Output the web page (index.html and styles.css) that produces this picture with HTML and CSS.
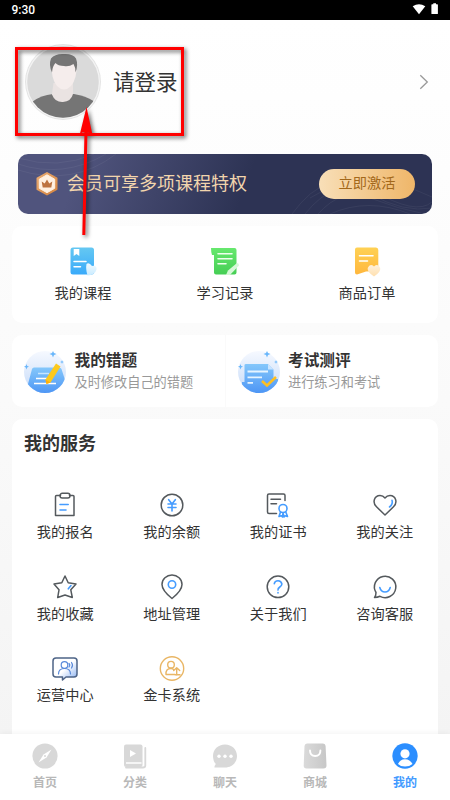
FILE: index.html
```html
<!DOCTYPE html>
<html lang="zh-CN">
<head>
<meta charset="utf-8">
<meta name="viewport" content="width=device-width">
<title>我的</title>
<link rel="stylesheet" href="styles.css">
</head>
<body>
<div class="screen">
  <header class="status">
    <span class="time">9:30</span>
    <svg class="status-icons" width="28" height="14" viewBox="0 0 28 14"><path d="M1.700 4.200Q8 .2 14.300 4.200L8 12.200Z" fill="#fff"/><path d="M21 2.300h1.300V1.300h2.700v1H26.300q.6 0 .6.600v8.600q0 .6-.6.600h-5.300q-.6 0-.6-.6v-8.600q0-.6.600-.6" fill="#fff"/></svg>
  </header>

  <main class="content">
    <section class="profile">
      <svg class="avatar" width="78" height="78" viewBox="0 0 78 78">
        <defs><clipPath id="face"><circle cx="39" cy="39" r="35.800"/></clipPath></defs>
        <circle cx="39" cy="39" r="38" fill="#e4e4e4"/><circle cx="39" cy="39" r="37" fill="#f4f4f4"/>
        <g clip-path="url(#face)">
          <rect width="78" height="78" fill="#dadada"/>
          <path d="M0 78L8 59Q17 52 29 51H50Q62 53 69.500 58L78 78Z" fill="#757575"/>
          <path d="M29.500 40H49V51Q47 58.500 39 59T28 51.500Z" fill="#eae3e2"/>
          <path d="M27.500 20Q28 14 40 14T52.500 22Q53 36 47 43Q40 50 33 43Q27 36 27.500 20" fill="#f5edec"/>
          <path d="M28 29.500Q24.500 22 27 15.500Q31 10.500 40 11Q49 10.500 52 15.500Q54.500 22 51.500 29.500Q51.500 24 49.500 21Q45 24 40 23Q34 23 31.500 20Q28.500 23 28 29.500" fill="#757575"/>
        </g>
      </svg>
      <span class="login">请登录</span>
      <svg class="chevron" width="10" height="16" viewBox="0 0 10 16"><path d="M1.300 1.200L8.300 8 1.300 14.800" fill="none" stroke="#999" stroke-width="1.300"/></svg>
    </section>

    <section class="vip">
      <svg class="waves" width="414" height="60" viewBox="0 0 414 60" fill="none" stroke="#fff" stroke-opacity=".055">
        <path d="M0 10Q45 25 88 0M0 16Q55 33 98 0M0 4Q40 16 76 0M274 60Q310 10 354 36T414 48M287 60Q318 21 352 40T414 54M300 60Q324 33 352 44T407 60M312 60Q350 43 392 60M292 44Q345 10 414 43"/>
      </svg>
      <svg class="badge" width="24" height="28" viewBox="0 0 24 28">
        <defs><linearGradient id="rim" x2="1" y2="1"><stop stop-color="#e9ab72"/><stop offset="1" stop-color="#d4843f"/></linearGradient></defs>
        <path d="M12 3L21.500 8.300V19.200L12 24.500 2.500 19.200V8.300Z" fill="url(#rim)" stroke="url(#rim)" stroke-width="2" stroke-linejoin="round"/>
        <path d="M12 4.800L19.700 9.200V18.300L12 22.700 4.300 18.300V9.200Z" fill="#fff0e1" stroke="#fff0e1" stroke-linejoin="round"/>
        <path d="M6.700 11.500L9.700 13.500 12 9.600 14.300 13.500 17.300 11.500 16.300 17.500H7.700Z" fill="#bd7340"/>
      </svg>
      <span class="vip-text">会员可享多项课程特权</span>
      <span class="activate">立即激活</span>
    </section>

    <section class="card shortcuts">
      <div class="shortcut">
        <svg width="32" height="32" viewBox="0 0 32 32"><defs><linearGradient id="blue" x2="0" y2="1"><stop stop-color="#65c8f2"/><stop offset="1" stop-color="#39aafa"/></linearGradient><linearGradient id="pale" x2="0" y2="1"><stop stop-color="#f0faff"/><stop offset="1" stop-color="#c9ebff"/></linearGradient></defs>
          <rect x="3.500" y="2.500" width="23.500" height="27" rx="2.500" fill="url(#blue)"/><path d="M6.700 4H12.300V11L9.500 9 6.700 11Z" fill="#fff"/><path d="M7 16.500H19M7 21.700H13.500" stroke="#fff" stroke-width="1.500" stroke-linecap="round"/><path d="M19.500 19Q22 17 25 21Q30 20 29.500 24.500Q28 30 20.500 30.500Q18.500 24 19.500 19" fill="url(#pale)"/></svg>
        <span class="label">我的课程</span>
      </div>
      <div class="shortcut">
        <svg width="32" height="32" viewBox="0 0 32 32"><defs><linearGradient id="green" x2="0" y2="1"><stop stop-color="#67e86e"/><stop offset="1" stop-color="#45ce54"/></linearGradient></defs>
          <path d="M2 3H25.500Q27.500 3 27.500 5V27.500Q27.500 29.500 25.500 29.500H7Q5 29.500 5 27.500V10H3Q2 7 2 3" fill="url(#green)"/><path d="M9 8.700H23M9 13.700H23M9 18.700H17" stroke="#efffed" stroke-width="1.600" stroke-linecap="round"/><path d="M17 30L19 25.500 28 18Q30 18 30 20.500L21 30Z" fill="#d6f8d7"/></svg>
        <span class="label">学习记录</span>
      </div>
      <div class="shortcut">
        <svg width="32" height="32" viewBox="0 0 32 32"><defs><linearGradient id="yellow" x2="0" y2="1"><stop stop-color="#ffd154"/><stop offset="1" stop-color="#ffb73d"/></linearGradient><linearGradient id="cream" x2="0" y2="1"><stop stop-color="#fff1db"/><stop offset="1" stop-color="#ffdfae"/></linearGradient></defs>
          <path d="M6 2.500H25Q27.300 2.500 27.300 5V26L15 26.500 6 29.500Q4 29.500 4 27.500V4.500Q4 2.500 6 2.500" fill="url(#yellow)"/><path d="M8.500 10.700H22M8.500 16H16.500" stroke="#fff" stroke-width="1.600" stroke-linecap="round"/><path d="M23 31.500Q16 27 16.700 23Q19 18 23 21.500Q27 18 29.200 23Q30 27 23 31.500" fill="url(#cream)"/></svg>
        <span class="label">商品订单</span>
      </div>
    </section>

    <section class="card practice">
      <div class="practice-item">
        <svg width="46" height="50" viewBox="0 0 46 50"><defs><linearGradient id="disc" x2="0" y2="1"><stop stop-color="#f6f9ff"/><stop offset="1" stop-color="#c5daf8"/></linearGradient><linearGradient id="sheet" x2="0" y2="1"><stop stop-color="#84c7fb"/><stop offset="1" stop-color="#468ff4"/></linearGradient><clipPath id="round"><circle cx="23" cy="25" r="21"/></clipPath></defs>
          <circle cx="23" cy="25" r="21" fill="url(#disc)"/><path clip-path="url(#round)" d="M10 22Q10.500 20.500 12 20.500H37Q39 20.500 39.500 22L44 36V50H2V37H6Z" fill="url(#sheet)"/>
          <path d="M16 26.500H27" stroke="#c6e5ff" stroke-width="1.500"/><path d="M14 31.500H25M12 36.500H34" stroke="#fff" stroke-width="1.500"/><path d="M34 16.500L38.500 19.500 28.500 35.500 24.500 37 23.500 32.500Z" fill="#fdc91d"/><path d="M23.500 32.500L28.500 35.500 24.500 37Z" fill="#ffad0d"/>
          <path d="M31 4L32 6 34.500 7 32 8 31 10.500 30 8 27.500 7 30 6ZM4.500 17L5.200 19 7 19.500 5.200 20.500 4.500 22.500 3.800 20.500 2 19.500 3.800 19ZM40 13L40.500 14.500 42 15 40.500 15.500 40 17 39.500 15.500 38 15 39.500 14.500Z" fill="#68b6fb"/></svg>
        <div class="practice-copy"><strong>我的错题</strong><span>及时修改自己的错题</span></div>
      </div>
      <div class="practice-item second">
        <svg width="46" height="50" viewBox="0 0 46 50"><circle cx="23" cy="25" r="21" fill="url(#disc)"/><path clip-path="url(#round)" d="M8.500 18Q8.500 17 10 17H32L37.500 22.500V32H42V50H6V35H8.500Z" fill="url(#sheet)"/><path d="M32 17L37.500 22.500H32Z" fill="#c9e4ff"/>
          <path d="M11.500 24.500H32M11.500 30.300H26M11.500 35.800H17" stroke="#e6f4ff" stroke-width="1.800"/><path d="M26 34L31 38.500 40 30" fill="none" stroke="#fdbf20" stroke-width="2.600"/>
          <path d="M31 4L32 6 34.500 7 32 8 31 10.500 30 8 27.500 7 30 6ZM4.500 17L5.200 19 7 19.500 5.200 20.500 4.500 22.500 3.800 20.500 2 19.500 3.800 19ZM40 13L40.500 14.500 42 15 40.500 15.500 40 17 39.500 15.500 38 15 39.500 14.500Z" fill="#68b6fb"/></svg>
        <div class="practice-copy"><strong>考试测评</strong><span>进行练习和考试</span></div>
      </div>
    </section>

    <section class="card services">
      <h2>我的服务</h2>
      <div class="service-grid">
        <div class="service"><svg viewBox="0 0 28 28"><path d="M9.500 4.500H5.500Q4.500 4.500 4.500 5.500V24.500H23V5.500Q23 4.500 22 4.500H18.500"/><rect x="9" y="2.300" width="10" height="4.700" rx="2.300"/><path class="accent" d="M9 13.500H17.200M9 19H15"/></svg><span class="label">我的报名</span></div>
        <div class="service"><svg viewBox="0 0 28 28"><circle cx="14" cy="14" r="10.800"/><path class="accent" d="M10.700 8.700L14 13 17.300 8.700M10 13H18M10 16.500H18M14 13V20"/></svg><span class="label">我的余额</span></div>
        <div class="service"><svg viewBox="0 0 28 28"><path d="M12.500 22.500H5Q3.500 22.500 3.500 21V4.500Q3.500 3 5 3H19.500Q21 3 21 4.500V9.500M7 8.200H16.500M7 12.800H12.500"/><g class="accent"><circle cx="19" cy="17.500" r="4"/><path d="M16.500 21L15 25.500 17.500 24.700 18.500 26 19 22 20 26 21 24.700 23.500 25.500 21.800 21"/></g></svg><span class="label">我的证书</span></div>
        <div class="service"><svg viewBox="0 0 28 28"><path d="M14 24L5.500 15.800C1 11.500 3.300 4.500 9 4.500Q12 4.500 14 7Q16 4.500 19 4.500C24.700 4.500 27 11.500 22.500 15.800Z"/><path class="accent" d="M21 9.200Q22.300 13 18.500 16"/></svg><span class="label">我的关注</span></div>
        <div class="service"><svg viewBox="0 0 28 28"><path d="M14 3L17.200 9.700 25 11 19.800 16.800 21.300 24.500 14 22 6.700 24.500 8 16.800 3 11 10.800 9.700Z"/><path class="accent" d="M20 12.500L17.300 15.800"/></svg><span class="label">我的收藏</span></div>
        <div class="service"><svg viewBox="0 0 28 28"><path d="M14 25.500Q4 17.500 4 11.500A10 9.500 0 0 1 24 11.500Q24 17.500 14 25.500Z"/><circle class="accent" cx="14" cy="11.500" r="3.700"/></svg><span class="label">地址管理</span></div>
        <div class="service"><svg viewBox="0 0 28 28"><circle cx="14" cy="13.800" r="10.800"/><path class="accent" d="M10.300 10.700Q10.800 7.700 14 7.700T17.900 11Q17.900 12.500 15.800 14T14 17M14 19.500V20"/></svg><span class="label">关于我们</span></div>
        <div class="service"><svg viewBox="0 0 28 28"><path d="M5 19.500A10.700 10.700 0 1 1 9 23.300Q6.500 24.500 3.500 24.500Q5 23 5 19.500Z"/><path class="accent" d="M8.800 14.500Q10 19 14 19T19.200 14.500"/></svg><span class="label">咨询客服</span></div>
        <div class="service"><svg viewBox="0 0 28 28"><defs><linearGradient id="bubble" x2="1" y2="1"><stop offset=".5" stop-color="#fff"/><stop offset="1" stop-color="#86aef0"/></linearGradient></defs><path class="bubble" d="M5 4H23Q26 4 26 7V20Q26 23 23 23H15L11.500 26V23H5Q2 23 2 20V7Q2 4 5 4Z"/><g class="community"><circle cx="13.500" cy="11" r="3.300"/><path d="M7.500 20Q7.500 14.500 13.500 14.500T19.500 20M18 9.500Q19.500 11 18 13M20.500 8.500Q22.500 11 20.500 14"/></g></svg><span class="label">运营中心</span></div>
        <div class="service"><svg viewBox="0 0 28 28" class="gold"><circle cx="14" cy="14.500" r="11.700"/><circle cx="13" cy="10.700" r="3.300"/><path d="M17 20.500H8Q7.500 14.500 13 14.500Q15 14.500 16 16M18.700 21V14M15.700 16.500L18.700 13.700 21.700 16.500M17 20.700H22"/></svg><span class="label">金卡系统</span></div>
      </div>
    </section>
  </main>

  <nav class="tabs">
    <div class="tab"><svg viewBox="0 0 28 28"><circle cx="14" cy="14" r="12.600" fill="#d8d8d8"/><path d="M20.500 7.500L15.500 15.500 7.500 20.500 12.500 12.500Z" fill="#fff"/><circle cx="14" cy="14" r="1" fill="#d8d8d8"/></svg><span>首页</span></div>
    <div class="tab"><svg viewBox="0 0 28 28"><rect x="3" y="2.500" width="18.500" height="22.500" rx="2" fill="#d8d8d8"/><path d="M24.300 6V23.500Q24.300 25.500 22 25.500H5" fill="none" stroke="#d8d8d8" stroke-width="1.800" stroke-linecap="round"/><path d="M5 21H20.500" stroke="#fff" stroke-width="1.500"/><path d="M9 8L15 11.500 9 15Z" fill="#fff"/></svg><span>分类</span></div>
    <div class="tab"><svg viewBox="0 0 28 28"><path d="M14 2.500C21 2.500 26 7.500 26 14S21 25.500 14 25.500H3.500Q3 24.500 4.800 22Q2 19 2 14C2 7.500 7 2.500 14 2.500" fill="#d8d8d8"/><circle cx="8" cy="14.300" r="1.700" fill="#fff"/><circle cx="14" cy="14.300" r="1.700" fill="#fff"/><circle cx="20" cy="14.300" r="1.700" fill="#fff"/></svg><span>聊天</span></div>
    <div class="tab"><svg viewBox="0 0 28 28"><defs><linearGradient id="bag"><stop stop-color="#dadada"/><stop offset="1" stop-color="#c7c7c7"/></linearGradient></defs><path d="M6 1.500H22Q24.500 1.500 24.600 4L25.500 23.500Q25.500 26.500 22.500 26.500H5.500Q2.500 26.500 2.700 23.500L3.500 4Q3.700 1.500 6 1.500" fill="url(#bag)"/><path d="M9 8.500Q9 14 14.200 14T19.400 8.500" fill="none" stroke="#fff" stroke-width="1.900" stroke-linecap="round"/></svg><span>商城</span></div>
    <div class="tab active"><svg viewBox="0 0 28 28"><circle cx="14" cy="14" r="12.700" fill="#2b8eff"/><circle cx="14" cy="11.800" r="4.600" fill="#fff"/><path d="M7 22Q9 17.200 14 17.200T21.500 22Q18.500 24.500 14 24.500T7 22" fill="#fff"/></svg><span>我的</span></div>
  </nav>

  <svg class="pointer" width="200" height="250" viewBox="0 0 200 250">
    <rect x="16.500" y="48.500" width="166" height="86" fill="none" stroke="#f00" stroke-width="3"/>
    <path d="M84.500 131H87.500L85.300 235H82.300ZM86.500 107L92.300 134Q86 131 80 133.500Z" fill="#f00"/>
  </svg>
</div>
</body>
</html>
```
FILE: styles.css
```css
* { box-sizing: border-box; }
body {
  margin: 0;
  font-family: "Noto Sans CJK SC", sans-serif;
  color: #333;
}
.screen {
  position: relative;
  display: flex;
  flex-direction: column;
  width: 450px;
  height: 800px;
  overflow: hidden;
  background: linear-gradient(#fff 20px, #fafafa 400px, #f4f4f4 734px);
}
svg { display: block; flex-shrink: 0; }
.status {
  flex: 0 0 20px;
  display: flex;
  align-items: center;
  justify-content: space-between;
  padding: 0 11px 0 11.500px;
  background: #000;
  color: #fff;
}
.time { font: 500 12px/20px Roboto, sans-serif; }
.status-icons { margin-top: -2px; }
.content { flex: 1; min-height: 0; overflow: hidden; }
.profile {
  height: 134px;
  display: flex;
  align-items: center;
  padding: 0 21px 10px 24px;
}
.login { margin: -2px 0 0 11px; font-size: 21.500px; line-height: 30px; }
.chevron { margin-left: auto; }
.vip {
  position: relative;
  display: flex;
  align-items: center;
  height: 60px;
  margin: 0 18px;
  padding: 0 17px;
  border-radius: 10px;
  background: linear-gradient(110deg, #50547d 15%, #2d3354 55%);
}
.waves { position: absolute; inset: 0; }
.badge { position: relative; }
.vip-text {
  position: relative;
  margin: -4px 0 0 8px;
  font-size: 18px;
  line-height: 26px;
  color: #f2d5ad;
  white-space: nowrap;
}
.activate {
  position: relative;
  width: 96px;
  height: 30px;
  margin-left: auto;
  border-radius: 15px;
  background: linear-gradient(90deg, #f8dfb8, #efb669);
  color: #a3681a;
  font-size: 14.200px;
  line-height: 27px;
  text-align: center;
}
.card { margin: 12px 12px 0; border-radius: 10px; background: #fff; }
.shortcuts {
  display: grid;
  grid-template-columns: repeat(3, 1fr);
  height: 97px;
  padding-top: 19px;
}
.shortcut, .service, .tab { display: flex; flex-direction: column; align-items: center; }
.label { font-size: 14.200px; line-height: 20px; white-space: nowrap; }
.shortcut .label { margin-top: 5px; }
.practice { display: grid; grid-template-columns: 1fr 1fr; height: 72px; }
.practice-item { display: flex; padding: 12px 0 0 10px; }
.practice-item.second { padding-left: 10px; border-left: 1px solid #fafafa; }
.practice-copy { display: flex; flex-direction: column; margin-left: 6.500px; white-space: nowrap; }
.practice-copy strong { margin-top: 1px; font-size: 15.700px; line-height: 24px; font-weight: 700; }
.practice-copy span { font-size: 13.200px; line-height: 20px; color: #999; }
.practice-item.second .practice-copy { margin-left: 6px; }
.services { height: 330px; padding-top: 10px; }
.services h2 { margin: 0 0 0 12px; font-size: 18px; line-height: 26px; font-weight: 700; }
.service-grid {
  display: grid;
  grid-template-columns: repeat(4, 1fr);
  grid-auto-rows: 81.500px;
  margin-top: 36px;
}
.service svg {
  width: 28px;
  height: 28px;
  fill: none;
  stroke: #54595d;
  stroke-width: 1.500;
  stroke-linejoin: round;
  stroke-linecap: round;
}
.service .label { margin-top: 2px; }
.service .accent { stroke: #459cff; stroke-width: 1.600; }
.service .bubble { fill: url(#bubble); stroke: #4e6487; }
.service .community { stroke: #5889da; stroke-width: 1.200; }
.service .gold { stroke: #e9b665; stroke-width: 1.400; }
.tabs {
  position: relative;
  flex: 0 0 66px;
  display: grid;
  grid-template-columns: repeat(5, 1fr);
  padding-top: 8px;
  background: #fff;
  box-shadow: 0 -1px 6px rgba(0, 0, 0, .05);
}
.tab { color: #b8b8b8; font-size: 12px; line-height: 18px; font-weight: 700; }
.tab svg { width: 28px; height: 28px; }
.tab span { margin-top: 3px; }
.tab.active { color: #429aff; }
.pointer {
  position: absolute;
  top: 0;
  left: 0;
  filter: drop-shadow(2px 2px 2px rgba(0, 0, 0, .6));
  pointer-events: none;
}
```
